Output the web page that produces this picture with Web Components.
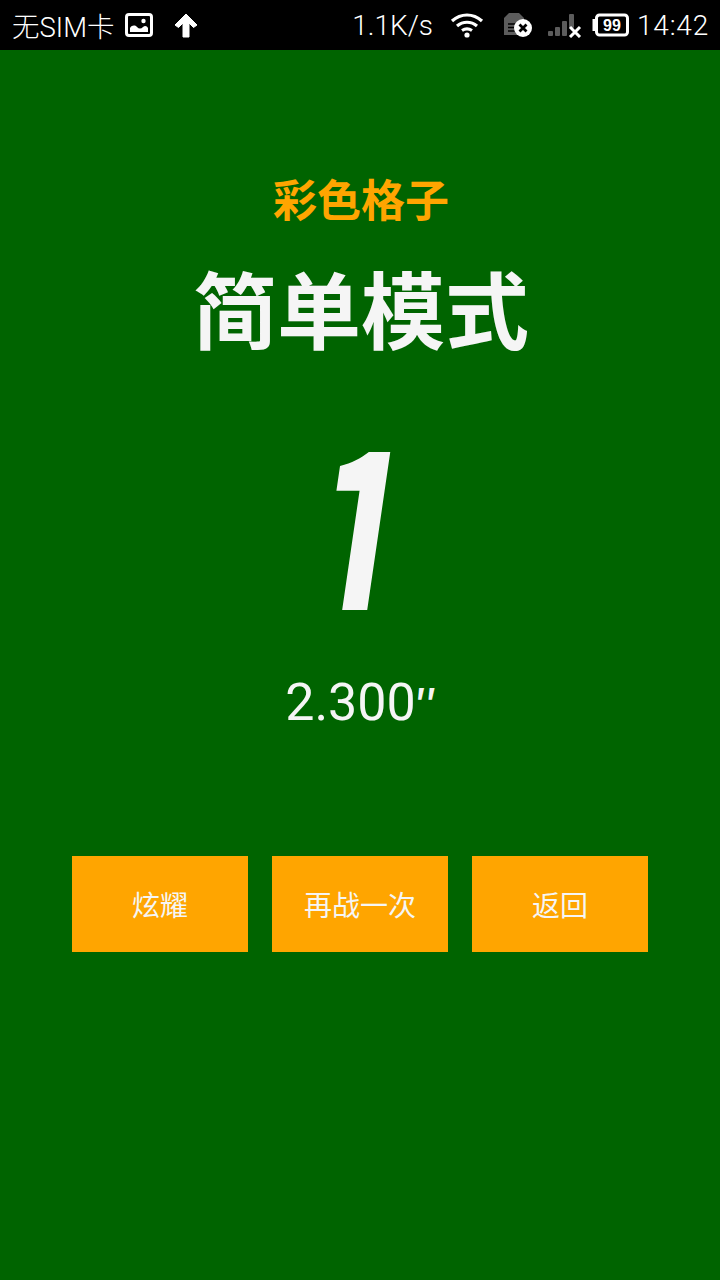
<!DOCTYPE html>
<html lang="zh">
<head>
<meta charset="utf-8">
<style>
html, body { margin: 0; height: 100%; background: #006400; }
body { font-family: Roboto, "Noto Sans CJK SC", sans-serif; }
</style>
</head>
<body>
<game-screen>
  <status-bar slot="status"></status-bar>
  <result-panel game="彩色格子" mode="简单模式" score="1" time="2.300">
    <action-button>炫耀</action-button>
    <action-button>再战一次</action-button>
    <action-button>返回</action-button>
  </result-panel>
</game-screen>
<script>
class GameScreen extends HTMLElement {
  constructor() {
    super();
    this.attachShadow({ mode: 'open' }).innerHTML = `
      <style>
        :host { display: flex; flex-direction: column; width: 720px; height: 1280px; background: #006400; overflow: hidden; }
      </style>
      <slot name="status"></slot>
      <slot></slot>`;
  }
}

class StatusBar extends HTMLElement {
  constructor() {
    super();
    this.attachShadow({ mode: 'open' }).innerHTML = `
      <style>
        :host { display: flex; align-items: center; height: 50px; background: #000; color: #fff; font-family: Roboto, "Noto Sans CJK SC", sans-serif; font-weight: 300; font-size: 28px; flex: none; }
        .left { display: flex; align-items: center; padding-left: 12px; font-size: 27.5px; }
        .right { display: flex; align-items: center; margin-left: auto; padding-right: 11px; }
        svg { display: block; flex: none; }
        .img { margin-left: 11px; }
        .up { margin-left: 20px; }
        .wifi { margin-left: 17px; }
        .sim { margin-left: 19px; }
        .sig { margin-left: 15px; }
        .bat { margin-left: 9px; }
        .time { margin-left: 8px; letter-spacing: .8px; }
      </style>
      <div class="left">
        <span>无SIM卡</span>
        <svg class="img" width="28" height="24" viewBox="0 0 28 24"><rect x="1.5" y="1.5" width="25" height="21" rx="2.5" fill="none" stroke="#fff" stroke-width="3"/><path d="M5 19v-4c2-3 5-3 7-1s4 2 6 0 4-1 5 1v4z" fill="#fff"/><circle cx="18.500" cy="8" r="2.200" fill="#fff"/></svg>
        <svg class="up" width="26" height="26" viewBox="0 0 26 26"><path d="M13 2L24 13 20.500 15.500 16 11V25H10V11L5.500 15.500 2 13z" fill="#fff" stroke="#fff" stroke-width="1" stroke-linejoin="round"/></svg>
      </div>
      <div class="right">
        <span>1.1K/s</span>
        <svg class="wifi" width="34" height="26" viewBox="0 0 34 26"><path d="M2 9C11 1 23 1 32 9M7 14C13 9 21 9 27 14M12 18.500C15 16.500 19 16.500 22 18.500" fill="none" stroke="#fff" stroke-width="3.200"/><circle cx="17" cy="23" r="2.600" fill="#fff"/></svg>
        <svg class="sim" width="30" height="26" viewBox="0 0 30 26"><path d="M6 1H16L21 6V23H1V6z" fill="#5c5c5c"/><path d="M5 12H12M5 15.500H12M5 19H12" stroke="#000" stroke-width="1.500"/><circle cx="20" cy="16" r="9" fill="#fff"/><path d="M16.500 12.500L23.500 19.500M23.500 12.500L16.500 19.500" stroke="#000" stroke-width="2.800"/></svg>
        <svg class="sig" width="34" height="26" viewBox="0 0 34 26"><rect x="0" y="19" width="5" height="5" rx="1" fill="#5c5c5c"/><rect x="7" y="15" width="5" height="9" rx="1" fill="#5c5c5c"/><rect x="14" y="9" width="5" height="15" rx="1" fill="#5c5c5c"/><rect x="21" y="2" width="5" height="14" rx="1" fill="#5c5c5c"/><path d="M22 15L32 25M32 15L22 25" stroke="#fff" stroke-width="3"/></svg>
        <svg class="bat" width="38" height="24" viewBox="0 0 38 24"><path d="M4 6H1.500V18H4z" fill="#fff"/><rect x="5.500" y="2" width="31" height="20" rx="3" fill="none" stroke="#fff" stroke-width="3"/><text x="21" y="18" text-anchor="middle" font-family="Liberation Sans" font-size="16" font-weight="700" fill="#fff">99</text></svg>
        <span class="time">14:42</span>
      </div>`;
  }
}

class ResultPanel extends HTMLElement {
  constructor() {
    super();
    this.attachShadow({ mode: 'open' }).innerHTML = `
      <style>
        :host { display: flex; flex-direction: column; align-items: center; flex: 1; color: #f5f5f5; }
        .game { margin-top: 119px; padding-left: 2px; font-size: 44px; line-height: 66px; font-weight: 700; color: #ffa500; }
        .mode { margin-top: 24px; padding-left: 2px; font-size: 84px; line-height: 112px; font-weight: 700; }
        /* the font's 1 has a foot the reference doesn't: crop it */
        .score { margin-top: 81px; width: 140px; height: 158px; overflow: hidden; text-align: center; font-family: "Noto Sans CJK SC", sans-serif; font-size: 268px; line-height: 160px; font-weight: 700; }
        .score span { display: block; margin-top: -1px; transform: translateX(-3px) skewX(-8.3deg) scaleX(.64); }
        .time { margin-top: 62px; padding-left: 2px; font-size: 52px; line-height: 62px; }
        .time i { font-family: Inter, sans-serif; font-size: 44px; font-weight: 500; font-style: normal; }
        .actions { display: flex; gap: 24px; margin-top: 121px; }
      </style>
      <div class="game"></div>
      <div class="mode"></div>
      <div class="score"><span></span></div>
      <div class="time"><span></span><i>″</i></div>
      <div class="actions"><slot></slot></div>`;
  }
  connectedCallback() {
    for (const k of ['game', 'mode']) {
      this.shadowRoot.querySelector('.' + k).textContent = this.getAttribute(k);
    }
    this.shadowRoot.querySelector('.score span').textContent = this.getAttribute('score');
    this.shadowRoot.querySelector('.time span').textContent = this.getAttribute('time');
  }
}

class ActionButton extends HTMLElement {
  constructor() {
    super();
    this.attachShadow({ mode: 'open' }).innerHTML = `
      <style>
        :host { display: flex; align-items: center; justify-content: center; width: 176px; height: 96px; background: #ffa500; color: #f5f5f5; font-size: 28px; }
      </style>
      <slot></slot>`;
  }
}

customElements.define('game-screen', GameScreen);
customElements.define('status-bar', StatusBar);
customElements.define('result-panel', ResultPanel);
customElements.define('action-button', ActionButton);
</script>
</body>
</html>
